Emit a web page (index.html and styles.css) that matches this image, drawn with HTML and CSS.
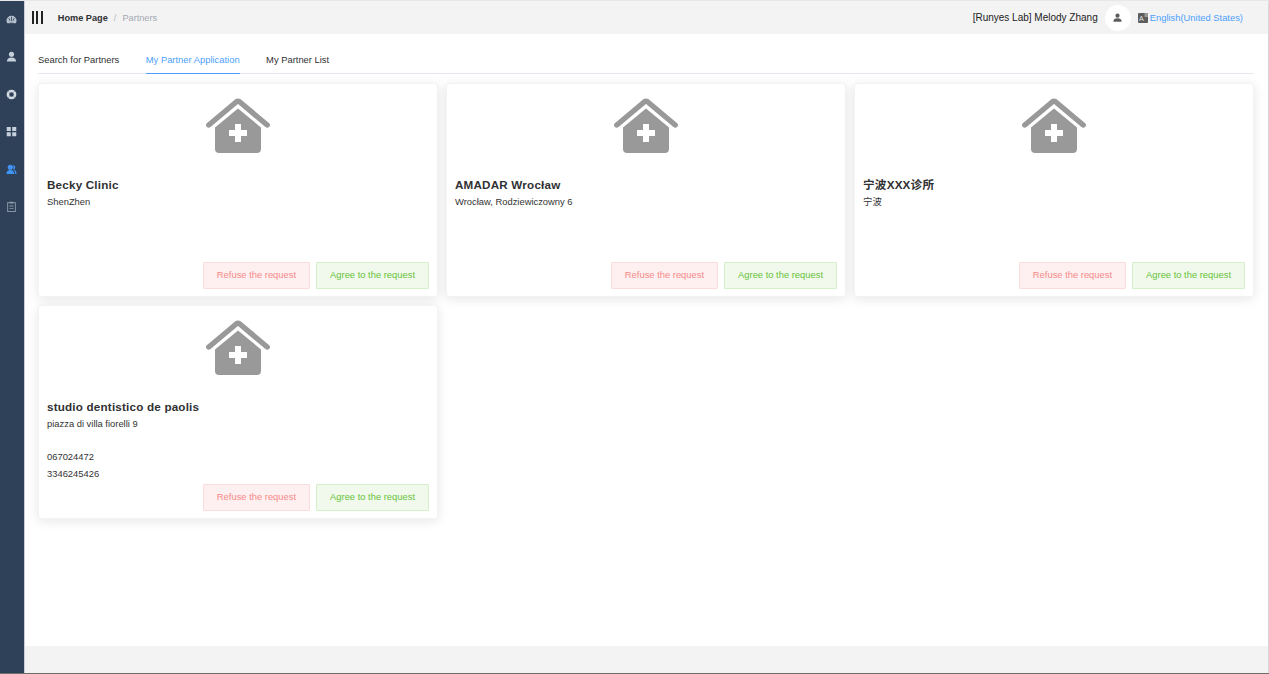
FILE: index.html
```html
<!DOCTYPE html>
<html lang="en">
<head>
<meta charset="utf-8">
<title>Partners</title>
<link rel="stylesheet" href="styles.css">
</head>
<body>
<svg class="defs" width="0" height="0" aria-hidden="true">
  <symbol id="house" viewBox="0 0 64 55">
    <path d="M2.800 27 30.500 3.800Q32 2.700 33.500 3.800L61.200 27" fill="none" stroke="#999" stroke-width="5.400" stroke-linecap="round" stroke-linejoin="round"/>
    <path d="M32 10.500 55 29.500V51c0 2.500-1.500 4-4 4H13c-2.500 0-4-1.500-4-4V29.500z" fill="#999"/>
    <path d="M29 26h6v6h6v6h-6v6h-6v-6h-6v-6h6z" fill="#fff"/>
  </symbol>
</svg>
<div class="app">
  <aside class="sidebar">
    <span class="nav-icon"><svg viewBox="0 0 12 12" width="11" height="11"><path d="M6 2A5.500 5 0 0 0 .5 7c0 1.100.3 2.100.9 3h9.200c.6-.9.900-1.900.9-3A5.500 5 0 0 0 6 2z" fill="#b4c0cd"/><path d="M6 3v4.500M3 4.500l1.500 3M9 4.500l-1.500 3M4 10h4" stroke="#2f4159" stroke-width=".9" fill="none"/></svg></span>
    <span class="nav-icon"><svg viewBox="0 0 12 12" width="11" height="11"><circle cx="6" cy="3.500" r="2.800" fill="#c6d0da"/><path d="M1 11.500c0-3 2-4.500 5-4.500s5 1.500 5 4.500z" fill="#c6d0da"/></svg></span>
    <span class="nav-icon"><svg viewBox="0 0 12 12" width="11" height="11"><circle cx="6" cy="6" r="3.900" fill="none" stroke="#d2dae2" stroke-width="2.800"/><path d="M2 2l2 2M10 2 8 4M2 10l2-2M10 10 8 8" stroke="#7e8d9f" stroke-width=".8"/></svg></span>
    <span class="nav-icon"><svg viewBox="0 0 12 12" width="11" height="11"><path d="M.8 1h4.400v4.400H.8zM6.800 1h4.400v4.400H6.800zM.8 6.800h4.400v4.400H.8zM6.800 6.800h4.400v4.400H6.800z" fill="#c6d0da"/></svg></span>
    <span class="nav-icon"><svg viewBox="0 0 12 12" width="11" height="11"><circle cx="4.700" cy="3.500" r="2.800" fill="#3f94f5"/><path d="M.5 11c0-3 1.500-4.500 4.200-4.500S9 8 9 11z" fill="#3f94f5"/><path d="M8 1c1.500.4 2 1.500 2 2.500S9.500 5.600 8.500 6c1.800.5 3 2 3 5H10c0-2-.5-3.500-2-5z" fill="#3f94f5"/></svg></span>
    <span class="nav-icon"><svg viewBox="0 0 12 12" width="11" height="11"><rect x="1.800" y="1.800" width="8.400" height="9.700" fill="none" stroke="#8e9cab" stroke-width="1"/><path d="M4 .8h4v2H4zM3.700 5h4.600v1H3.700zM3.700 7.500h4.600v1H3.700z" fill="#8e9cab"/></svg></span>
  </aside>
  <div class="main">
    <header class="topbar">
      <div class="bars"><i></i><i></i><i></i></div>
      <span class="crumb-home">Home Page</span>
      <span class="crumb-sep">/</span>
      <span class="crumb-current">Partners</span>
      <span class="user-name">[Runyes Lab] Melody Zhang</span>
      <span class="avatar"><svg viewBox="0 0 12 12" width="9" height="9"><circle cx="6" cy="3.500" r="2.800" fill="#5c5c5c"/><path d="M.5 11.500c0-3 2-4.500 5.500-4.500s5.500 1.500 5.500 4.500z" fill="#5c5c5c"/></svg></span>
      <svg class="lang-icon" viewBox="0 0 10 10" width="10" height="10"><rect width="10" height="10" rx="1" fill="#5d5d5d"/><path d="M6.500 0H9a1 1 0 0 1 1 1v3H6.500z" fill="#9a9a9a"/><text x="1" y="8" font-size="7" fill="#e2e2e2" font-family="Liberation Sans">A</text></svg>
      <span class="lang">English(United States)</span>
    </header>
    <main class="content">
      <nav class="tabs">
        <span class="tab">Search for Partners</span>
        <span class="tab active">My Partner Application</span>
        <span class="tab">My Partner List</span>
      </nav>
      <section class="cards">
        <article class="card">
          <svg class="house" width="64" height="55"><use href="#house"/></svg>
          <h2 class="card-title">Becky Clinic</h2>
          <p class="card-line">ShenZhen</p>
          <div class="actions"><button class="btn refuse">Refuse the request</button><button class="btn agree">Agree to the request</button></div>
        </article>
        <article class="card">
          <svg class="house" width="64" height="55"><use href="#house"/></svg>
          <h2 class="card-title">AMADAR Wrocław</h2>
          <p class="card-line">Wrocław, Rodziewiczowny 6</p>
          <div class="actions"><button class="btn refuse">Refuse the request</button><button class="btn agree">Agree to the request</button></div>
        </article>
        <article class="card">
          <svg class="house" width="64" height="55"><use href="#house"/></svg>
          <h2 class="card-title">宁波XXX诊所</h2>
          <p class="card-line">宁波</p>
          <div class="actions"><button class="btn refuse">Refuse the request</button><button class="btn agree">Agree to the request</button></div>
        </article>
        <article class="card">
          <svg class="house" width="64" height="55"><use href="#house"/></svg>
          <h2 class="card-title">studio dentistico de paolis</h2>
          <p class="card-line">piazza di villa fiorelli 9</p>
          <p class="card-line phone-first">067024472</p>
          <p class="card-line phone">3346245426</p>
          <div class="actions"><button class="btn refuse">Refuse the request</button><button class="btn agree">Agree to the request</button></div>
        </article>
      </section>
    </main>
    <footer class="footer"></footer>
  </div>
</div>
</body>
</html>
```
FILE: styles.css
```css
* { box-sizing: border-box; }
html, body { margin: 0; height: 100%; overflow: hidden; }
body {
  font-family: "Liberation Sans", "Noto Sans CJK SC", sans-serif;
  font-size: 9.400px;
  color: #333;
  background: #fff;
  border-top: 1px solid #e7e7eb;
  border-bottom: 1px solid #6b6f66;
}
.defs { position: absolute; }
.app { display: flex; height: 672px; }
.sidebar {
  width: 24px;
  flex: none;
  background: #2f4159;
  display: flex;
  flex-direction: column;
  align-items: center;
  padding: 12.700px 2px 0 0;
  gap: 26.500px;
}
.nav-icon { display: flex; width: 11px; height: 11px; }
.main {
  flex: 1;
  display: flex;
  flex-direction: column;
  min-width: 0;
  border-left: 1px solid #c9ced6;
  border-right: 1px solid #d8d8dc;
}
.topbar {
  height: 33px;
  flex: none;
  background: #f3f3f4;
  display: flex;
  align-items: center;
  padding-left: 7px;
  font-size: 9.200px;
}
.bars { display: flex; gap: 2.400px; margin-right: 15px; }
.bars i { display: block; width: 2px; height: 13px; background: #222; }
.crumb-home { font-weight: bold; color: #303133; }
.crumb-sep { color: #b5b9c0; margin: 0 6px; }
.crumb-current { color: #a4a9b2; }
.user-name { margin-left: auto; color: #222; font-size: 10px; }
.avatar {
  width: 26px;
  height: 26px;
  border-radius: 50%;
  background: #fff;
  display: flex;
  align-items: center;
  justify-content: center;
  margin: 0 7px;
}
.lang-icon { margin-right: 2px; }
.lang { color: #4d9ffb; margin-right: 25px; font-size: 9.400px; }
.content { flex: 1; padding: 16px 14px 0 13px; min-height: 0; }
.tabs {
  display: flex;
  gap: 26.500px;
  height: 24px;
  border-bottom: 1px solid #e4e7ed;
}
.tab { height: 24px; line-height: 20px; color: #303133; }
.tab.active { color: #4d9ffb; border-bottom: 1px solid #4d9ffb; }
.cards {
  display: grid;
  grid-template-columns: repeat(3, 400px);
  grid-auto-rows: 214px;
  gap: 8px;
  margin-top: 9px;
}
.card {
  display: flex;
  flex-direction: column;
  padding: 14px 8px 7px;
  border-radius: 3px;
  border: 1px solid #f3f3f5;
  box-shadow: 0 2px 12px rgba(0,0,0,.1);
  background: #fff;
}
.house { align-self: center; flex: none; }
.card-title { margin: 24px 0 0; font-size: 11.650px; line-height: 15px; font-weight: bold; color: #303133; letter-spacing: .2px; }
.card-line { margin: 3px 0 0; font-size: 9.400px; line-height: 14px; color: #333; }
.phone-first { margin-top: 19px; }
.phone { margin-top: 3px; }
.actions { margin-top: auto; display: flex; justify-content: flex-end; gap: 6px; }
.btn {
  height: 27px;
  padding: 0 13px 2px;
  font: 9.400px "Liberation Sans", sans-serif;
  border: 1px solid;
  border-radius: 1px;
}
.refuse { color: #f78989; background: #fef0f0; border-color: #fbdcdc; }
.agree { color: #67c23a; background: #f0f9eb; border-color: #d5efc8; }
.footer { height: 27px; flex: none; background: #f3f3f4; }
```
